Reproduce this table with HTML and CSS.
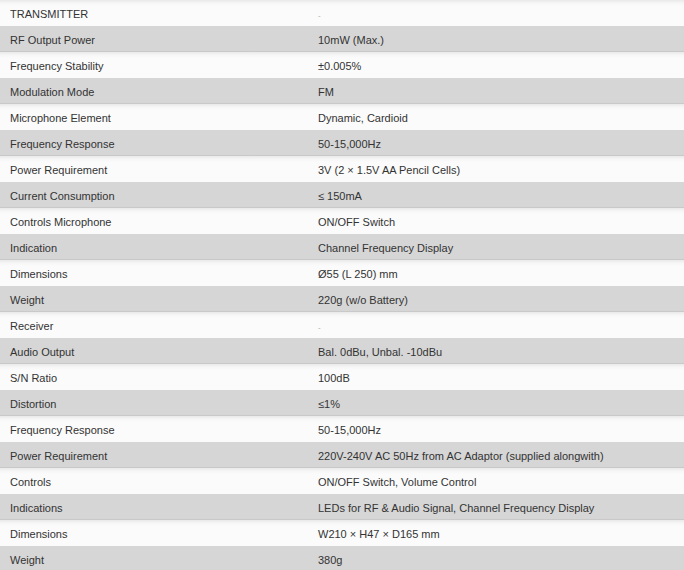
FILE: index.html
```html
<!DOCTYPE html>
<html>
<head>
<meta charset="utf-8">
<link rel="stylesheet" href="styles.css">
</head>
<body>
<table class="spec">
<tbody>
<tr><td>TRANSMITTER</td><td><span class="dash">-</span></td></tr>
<tr><td>RF Output Power</td><td>10mW (Max.)</td></tr>
<tr><td>Frequency Stability</td><td>±0.005%</td></tr>
<tr><td>Modulation Mode</td><td>FM</td></tr>
<tr><td>Microphone Element</td><td>Dynamic, Cardioid</td></tr>
<tr><td>Frequency Response</td><td>50-15,000Hz</td></tr>
<tr><td>Power Requirement</td><td>3V (2 × 1.5V AA Pencil Cells)</td></tr>
<tr><td>Current Consumption</td><td>≤ 150mA</td></tr>
<tr><td>Controls Microphone</td><td>ON/OFF Switch</td></tr>
<tr><td>Indication</td><td>Channel Frequency Display</td></tr>
<tr><td>Dimensions</td><td>Ø55 (L 250) mm</td></tr>
<tr><td>Weight</td><td>220g (w/o Battery)</td></tr>
<tr><td>Receiver</td><td><span class="dash">-</span></td></tr>
<tr><td>Audio Output</td><td>Bal. 0dBu, Unbal. -10dBu</td></tr>
<tr><td>S/N Ratio</td><td>100dB</td></tr>
<tr><td>Distortion</td><td>≤1%</td></tr>
<tr><td>Frequency Response</td><td>50-15,000Hz</td></tr>
<tr><td>Power Requirement</td><td>220V-240V AC 50Hz from AC Adaptor (supplied alongwith)</td></tr>
<tr><td>Controls</td><td>ON/OFF Switch, Volume Control</td></tr>
<tr><td>Indications</td><td>LEDs for RF &amp; Audio Signal, Channel Frequency Display</td></tr>
<tr><td>Dimensions</td><td>W210 × H47 × D165 mm</td></tr>
<tr><td>Weight</td><td>380g</td></tr>
</tbody>
</table>
</body>
</html>
```
FILE: styles.css
```css
html, body {
  margin: 0;
  padding: 0;
  background: #ffffff;
}
.spec {
  width: 684px;
  border-collapse: collapse;
  font-family: "Liberation Sans", Arial, sans-serif;
  font-size: 11px;
  color: #333333;
}
.spec td {
  height: 26px;
  padding: 2px 0 0 10px;
  box-sizing: border-box;
  vertical-align: middle;
  line-height: 14px;
}
.spec td:first-child {
  width: 308px;
}
.spec td:last-child {
  padding-left: 10px;
}
.spec .dash {
  color: #aaaaaa;
  font-size: 8px;
  position: relative;
  top: 1px;
}
.spec tr:nth-child(odd) td {
  background: linear-gradient(to bottom, #e9e9e9 0px, #f6f6f6 3px, #fbfbfb 6px, #fbfbfb 100%);
}
.spec tr:nth-child(even) td {
  background: #d6d6d6;
  box-shadow: inset 0 -1px 0 #c9c9c9;
}
```
